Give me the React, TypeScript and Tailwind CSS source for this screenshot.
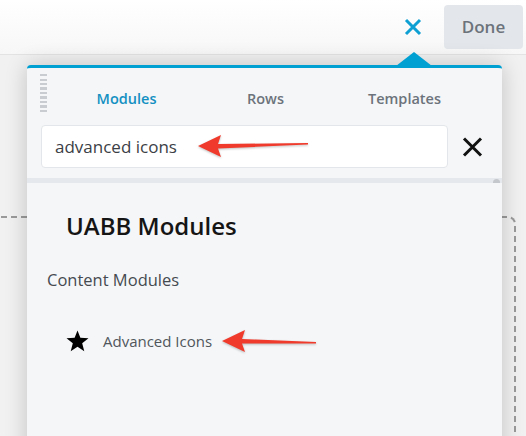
import React from 'react';

const tabs = ['Modules', 'Rows', 'Templates'];

function RedArrow({ width, tilt }: { width: number; tilt: number }) {
  // tip on the left, tail on the right
  return (
    <svg width={width} height={26} viewBox={`0 0 ${width} 26`} className="drop-shadow-[0_1px_1px_rgba(0,0,0,0.25)]">
      <polygon
        points={`1,13 24,2 21,11 ${width - 1},${13 - tilt} ${width - 1},${14.5 - tilt} 21,15.5 24,24`}
        fill="#f03a2b"
      />
    </svg>
  );
}

export default function App() {
  return (
    <div
      className="relative w-[526px] h-[436px] overflow-hidden bg-[#f1f1f1]"
      style={{ fontFamily: '"Open Sans", "Noto Sans", sans-serif' }}
    >
      {/* canvas row outline behind the panel */}
      <div className="absolute left-[-20px] top-[216px] w-[536px] h-[300px] border-2 border-dashed border-[#9a9a9a] rounded-tr-[8px]" />

      {/* top bar */}
      <div className="relative h-[55px] bg-gradient-to-b from-white to-[#f7f7f7] border-b border-[#e3e3e3] flex items-center justify-end pr-[3px]">
        <svg width="20" height="20" viewBox="0 0 20 20" className="mr-[21px]">
          <path d="M3 3 L17 17 M17 3 L3 17" stroke="#0e9fd3" strokeWidth="3" />
        </svg>
        <button className="w-[79px] h-[44px] rounded-[4px] bg-[#e3e6ea] text-[#6c737b] text-[17px] font-semibold">
          Done
        </button>
      </div>

      {/* content panel */}
      <div className="relative ml-[27px] mt-[10px] w-[475px] h-[400px] bg-[#f5f6f8] border-t-[3px] border-[#00a0d2] rounded-t-[4px] shadow-[0_0_22px_rgba(0,0,0,0.2)]">
        <div className="absolute left-[369px] top-[-16px] w-0 h-0 border-x-[18px] border-x-transparent border-b-[14px] border-b-[#00a0d2]" />

        {/* tabs */}
        <div className="h-[57px] flex">
          <div className="ml-[13px] mt-[6px] w-[7px] h-[38px] bg-[repeating-linear-gradient(to_bottom,#c9cdd2_0px,#c9cdd2_2px,transparent_2px,transparent_4.5px)]" />
          <div className="ml-[10px] pt-[4px] w-[417px] grid grid-cols-3 items-center">
            {tabs.map((t, i) => (
              <div
                key={t}
                className={`text-center text-[14.5px] font-semibold ${i === 0 ? 'text-[#1390c2]' : 'text-[#6c737b]'}`}
              >
                {t}
              </div>
            ))}
          </div>
        </div>

        {/* search */}
        <div className="flex items-center pl-[14px]">
          <div className="w-[407px] h-[43px] bg-white border border-[#e3e6ea] rounded-[4px] flex items-center pl-[13px] text-[17px] text-[#3b4046]">
            advanced icons
          </div>
          <svg width="21" height="20" viewBox="0 0 21 20" className="ml-[14px] mt-[1px]">
            <path d="M2 1.5 L19 18.5 M19 1.5 L2 18.5" stroke="#111" strokeWidth="3" />
          </svg>
        </div>

        <div className="relative mt-[10px] h-[5px] bg-[#e5e8ec]">
          <div className="absolute right-[2px] top-[1px] w-[7px] h-[4px] rounded-t-full bg-[#c4c8cd]" />
        </div>

        {/* module list */}
        <div className="pt-[27px]">
          <div className="pl-[39px] text-[24px] font-semibold text-[#151515] leading-[32px]">UABB Modules</div>
          <div className="pl-[20px] mt-[26px] text-[16.5px] text-[#454a50] leading-[24px]">Content Modules</div>
          <div className="pl-[39px] mt-[38px] flex items-center">
            <svg width="23" height="22" viewBox="0 0 24 23">
              <polygon
                points="12,0.5 15,8.2 23.5,8.6 16.9,13.9 19.1,22.3 12,17.5 4.9,22.3 7.1,13.9 0.5,8.6 9,8.2"
                fill="#000"
              />
            </svg>
            <span className="ml-[14px] text-[15px] text-[#50565c]">Advanced Icons</span>
          </div>
        </div>
      </div>

      {/* annotation arrows */}
      <div className="absolute left-[197px] top-[133px]">
        <RedArrow width={112} tilt={3} />
      </div>
      <div className="absolute left-[221px] top-[328px]">
        <RedArrow width={96} tilt={-1} />
      </div>
    </div>
  );
}
